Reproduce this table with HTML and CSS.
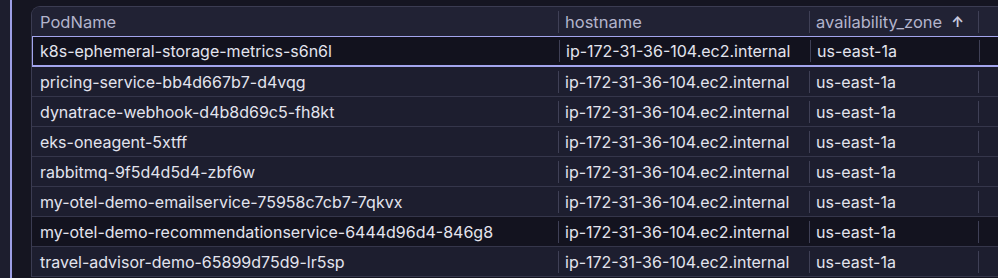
FILE: index.html
```html
<!DOCTYPE html>
<html>
<head>
<meta charset="utf-8">
<link rel="stylesheet" href="styles.css">
</head>
<body>
<div class="page">
  <div class="side"></div>
  <div class="accent"></div>
  <div class="gutter">
    <div class="table">
      <div class="row head">
        <div class="cell first">PodName</div>
        <div class="cell">hostname</div>
        <div class="cell">availability_zone <span class="sort">↑</span></div>
        <div class="cell"></div>
      </div>
      <div class="row selected">
        <div class="cell first">k8s-ephemeral-storage-metrics-s6n6l</div>
        <div class="cell">ip-172-31-36-104.ec2.internal</div>
        <div class="cell">us-east-1a</div>
        <div class="cell"></div>
      </div>
      <div class="row">
        <div class="cell first">pricing-service-bb4d667b7-d4vqg</div>
        <div class="cell">ip-172-31-36-104.ec2.internal</div>
        <div class="cell">us-east-1a</div>
        <div class="cell"></div>
      </div>
      <div class="row">
        <div class="cell first">dynatrace-webhook-d4b8d69c5-fh8kt</div>
        <div class="cell">ip-172-31-36-104.ec2.internal</div>
        <div class="cell">us-east-1a</div>
        <div class="cell"></div>
      </div>
      <div class="row">
        <div class="cell first">eks-oneagent-5xtff</div>
        <div class="cell">ip-172-31-36-104.ec2.internal</div>
        <div class="cell">us-east-1a</div>
        <div class="cell"></div>
      </div>
      <div class="row">
        <div class="cell first">rabbitmq-9f5d4d5d4-zbf6w</div>
        <div class="cell">ip-172-31-36-104.ec2.internal</div>
        <div class="cell">us-east-1a</div>
        <div class="cell"></div>
      </div>
      <div class="row">
        <div class="cell first">my-otel-demo-emailservice-75958c7cb7-7qkvx</div>
        <div class="cell">ip-172-31-36-104.ec2.internal</div>
        <div class="cell">us-east-1a</div>
        <div class="cell"></div>
      </div>
      <div class="row hover">
        <div class="cell first">my-otel-demo-recommendationservice-6444d96d4-846g8</div>
        <div class="cell">ip-172-31-36-104.ec2.internal</div>
        <div class="cell">us-east-1a</div>
        <div class="cell"></div>
      </div>
      <div class="row">
        <div class="cell first">travel-advisor-demo-65899d75d9-lr5sp</div>
        <div class="cell">ip-172-31-36-104.ec2.internal</div>
        <div class="cell">us-east-1a</div>
        <div class="cell"></div>
      </div>
    </div>
  </div>
</div>
</body>
</html>
```
FILE: styles.css
```css
html, body {
  margin: 0;
  padding: 0;
  background: #151521;
  overflow: hidden;
}
body {
  width: 998px;
  height: 278px;
  font-family: Inter, "Noto Sans", sans-serif;
  font-size: 16px;
}
.page {
  display: flex;
  height: 278px;
}
.side {
  width: 10px;
  background: #1d1e2e;
}
.accent {
  width: 2px;
  background: #9d9fe6;
}
.gutter {
  flex: 1;
  padding: 6px 0 0 19px;
  background: #151521;
  overflow: hidden;
}
.table {
  width: 1000px;
  border-left: 1px solid #3b3c52;
  border-top: 1px solid #3b3c52;
  border-top-left-radius: 9px;
  background: #1d1e2f;
  overflow: hidden;
}
.row {
  display: grid;
  grid-template-columns: 526px 251px 169px 1fr;
  height: 29px;
  border-bottom: 1px solid #35364b;
  align-items: stretch;
}
.row.head {
  background: #212234;
  height: 29px;
  border-bottom: 1px solid #3d3e54;
}
.row.selected {
  background: #12121e;
  border-top: 1px solid #a3a5ee;
  border-bottom: 2px solid #a3a5ee;
  border-left: 1px solid #a3a5ee;
  margin-top: -1px;
  height: 28px;
}
.row.hover {
  background: #13131f;
}
.cell {
  display: flex;
  align-items: center;
  padding-left: 7px;
  color: #e3e4ee;
  white-space: nowrap;
  background: linear-gradient(#3f4056, #3f4056) left center / 1px 22px no-repeat;
}
.head .cell {
  color: #b3b4cc;
  font-size: 16.5px;
}
.cell.first {
  padding-left: 8px;
  background: none;
}
.selected .cell.first {
  padding-left: 7px;
}
.sort {
  font-size: 14px;
  font-weight: 700;
  margin-left: 9px;
  color: #c8c9de;
}
```
